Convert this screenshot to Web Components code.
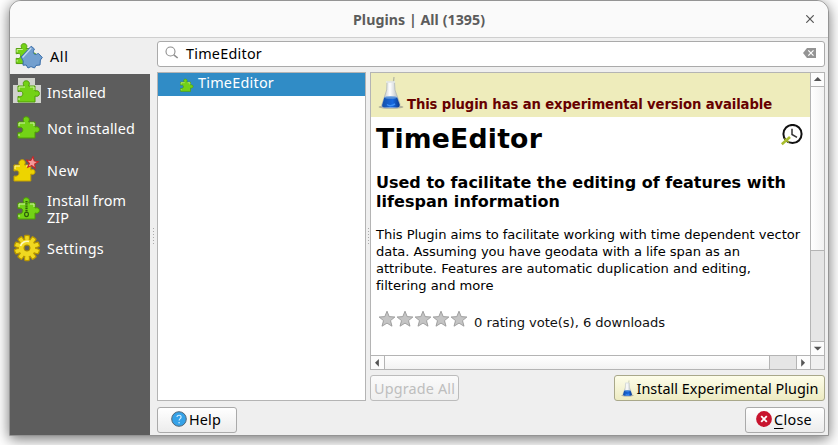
<!DOCTYPE html>
<html lang="en"><head><meta charset="utf-8"><title>Plugins</title>
<style>html,body{margin:0;width:838px;height:445px;overflow:hidden;background:#fff}</style></head><body>
<plugin-window></plugin-window>
<script>
const define=(name,html)=>customElements.define(name,class extends HTMLElement{
  connectedCallback(){ if(!this.shadowRoot) this.attachShadow({mode:'open'}).innerHTML=html; }
});

/* Text tracked to span the width given by w; n is the length of the longest line */
customElements.define('fit-text',class extends HTMLElement{
  connectedCallback(){
    const r=this.attachShadow({mode:'open'});
    r.innerHTML='<style>:host{display:block;white-space:pre}span{display:inline-block;vertical-align:top}</style><span><slot></slot></span>';
    const s=r.querySelector('span'),w=+this.getAttribute('w'),n=+this.getAttribute('n')||this.textContent.length;
    s.style.letterSpacing=((w-s.getBoundingClientRect().width)/n)+'px';
  }
});

const P='M5 8H11C9.3 4.5 10.8 2.8 13.3 2.8S17.3 5 15.6 8H22V13C24.8 12 26.4 13.6 26.4 15.6S24.6 19 22 18V24H5V18.4C8 19.6 9.8 17.8 9.8 15.8S8 12.4 5 13.6Z';
const green=`<path d="${P}" fill="#73d216" stroke="#4e9a06" stroke-width="1"/><path d="M6 12V9H12M17 9H21V12M6 22V20" fill="none" stroke="#d4f5a8"/>`;
const star='M0-5L1.4-1.6 5-1.4 2.2.9 3.2 4.5 0 2.5-3.2 4.5-2.2.9-5-1.4-1.4-1.6Z';
const flask=`<defs><linearGradient id="g"><stop stop-color="#a9b2b6"/><stop offset=".45" stop-color="#fff"/><stop offset="1" stop-color="#a4aeb2"/></linearGradient><linearGradient id="b"><stop stop-color="#1450a8"/><stop offset=".6" stop-color="#1668e0"/><stop offset="1" stop-color="#0a3a8c"/></linearGradient></defs>
<ellipse cx="13" cy="31" rx="12.5" ry="1.8" fill="#777" opacity=".5"/><path d="M14.5 14L16 1" stroke="#b5b8a2" stroke-width="1.3"/><path d="M9 6H16.5L17 14 22 28Q22.5 32 19 32H6Q2.5 32 4 28L8.7 14Z" fill="url(#g)" stroke="#aab3b5" stroke-width=".7"/><path d="M6.3 21.5H19.2L21.6 28.5Q22 31.4 19 31.4H6.5Q3.5 31.4 4.3 28.5Z" fill="url(#b)"/><ellipse cx="12.7" cy="21.5" rx="6.3" ry="1.3" fill="#5b93d8"/><path d="M8 6H17" stroke="#e8ecec" stroke-width="1.5"/><path d="M9 28.5Q12 31 17 28" stroke="#3d90f5" fill="none" stroke-width="1.5"/>`;
const gear=(()=>{let t='';for(let i=0;i<10;i++)t+=`<rect x="-2.3" y="-12.6" width="4.6" height="6" rx=".8" transform="rotate(${i*36})"/>`;return t;})();
const icons={
 all:['0 0 28 28',`<g transform="translate(-3.5,-1)scale(.94)">${green}</g><path d="M6 15L16.2 4.2 19.5 7C17.2 10 18.5 12.5 21 12.5 22 12.2 23 11 23.5 11.5L27.3 15.5 25.4 18 25 23 21 23.4 19.5 26 16 24.6 13 26 11.2 23 8 23.2 8.2 19Z" fill="#729fcf" stroke="#396da9" stroke-width="1" stroke-linejoin="round"/><path d="M7.6 15.5L16.2 6" stroke="#c4daf1" stroke-width="1.2"/>`],
 installed:['0 0 28 28',`<path d="M5 0H22V7H28V25H0V7H5Z" fill="#d0d2cc"/>${green}`],
 puzzle:['0 0 28 28',green],
 item:['4 1 24 24',green],
 fresh:['0 0 28 28',`<path d="M1 9H6.5C4.8 6 7 3.7 9.3 3.7S13.2 6 11.5 9H17.8V14C20 12.8 22 14 22 16S20 19 17.8 18V25H1V20C4 20.8 6 19 6 17S4 14 1 15Z" fill="#edd400" stroke="#c4a000" stroke-width="1"/><path d="M2 13V10H7M13 10H17" stroke="#fff6a0" fill="none"/><path d="${star}" transform="translate(19.2,6.6)scale(1.2)rotate(8)" fill="#f49a9a" stroke="#cc2222" stroke-width=".8"/>`],
 zip:['0 0 28 28',`${green}<path d="M13.5 6V18" stroke="#2e5c0a" stroke-width="2.2" stroke-dasharray="1.4 .8"/><ellipse cx="13.5" cy="19.3" rx="1.9" ry="2.3" fill="none" stroke="#2e5c0a" stroke-width="1.2"/>`],
 gear:['-14 -14 28 28',`<g fill="#edd400" stroke="#b89600" stroke-width="1.3">${gear}<circle r="8.6"/></g><g fill="#f0d820">${gear.replaceAll('-12.6','-11.8').replaceAll('x="-2.3"','x="-1.7"').replaceAll('4.6','3.4')}<circle r="8.2"/></g><path d="M-6.5-2A7 7 0 0 1 2-6.5" stroke="#fffbc0" stroke-width="1.6" fill="none"/><circle r="2.9" fill="#5c5c5c" stroke="#a88a00" stroke-width="1.2"/>`],
 flask:['0 0 26 34',flask],
 search:['0 0 14 14','<g fill="none" stroke="#8d8d8d"><circle cx="5.5" cy="5.5" r="4.5" stroke-width="1.1"/><path d="M8.8 8.8L12.7 12" stroke-width="1.6"/></g>'],
 clear:['0 0 13 10','<path d="M4 0H13V10H4L0 5Z" fill="#949494"/><path d="M5.3 2.3L10.5 7.7M10.5 2.3L5.3 7.7" stroke="#fff" stroke-width="1.2"/>'],
 close:['0 0 8 8','<path d="M.3.3L7.7 7.7M7.7.3L.3 7.7" stroke="#555" stroke-width="1.2"/>'],
 clock:['0 0 22 22','<circle cx="11.5" cy="10" r="9.1" fill="#fff" stroke="#111" stroke-width="2"/><path d="M11 4.7V10.5L16 13.4" fill="none" stroke="#333" stroke-width="1.5"/><path d="M.8 20.2L9 13" stroke="#a8bd2c" stroke-width="2.6"/><path d="M3.5 14.5L8 18.5" stroke="#a8bd2c" stroke-width="1.2"/>'],
 star:['0 0 18 18','<path d="M9 1.2L11.2 6.6 16.9 7 12.5 10.6 14 16.2 9 13.1 4 16.2 5.5 10.6 1.1 7 6.8 6.6Z" fill="#c4c4c4" stroke="#999" stroke-width=".9"/>'],
 help:['0 0 16 16','<circle cx="8" cy="8" r="7.3" fill="#35a2e8" stroke="#536777"/><path d="M6 6.1C6 3.5 10.2 3.6 10.1 6.1 10 7.7 8.1 7.8 8.1 9.6" stroke="#d9f0ff" fill="none" stroke-width="1.1"/><circle cx="8.1" cy="11.7" r=".8" fill="#d9f0ff"/>'],
 stop:['0 0 16 16','<circle cx="8" cy="8" r="7.9" fill="#c8142e"/><path d="M5.2 5.2L10.8 10.8M10.8 5.2L5.2 10.8" stroke="#fff" stroke-width="1.9"/>'],
 up:['0 0 14 14','<path d="M2.5 8.6L6.7 4.4 10.9 8.6Z" fill="#555"/>'],
 down:['0 0 14 14','<path d="M2.5 5L6.7 9.2 10.9 5Z" fill="#555"/>'],
 left:['0 0 14 14','<path d="M8.5 2.6L4.3 6.8 8.5 11Z" fill="#555"/>'],
 right:['0 0 14 14','<path d="M4.5 2.6L8.7 6.8 4.5 11Z" fill="#555"/>']
};
customElements.define('ui-icon',class extends HTMLElement{
  connectedCallback(){
    const [vb,body]=icons[this.getAttribute('name')],w=this.getAttribute('w')||28,h=this.getAttribute('h')||w;
    this.attachShadow({mode:'open'}).innerHTML=`<style>:host{display:block;flex:none;width:${w}px;height:${h}px}svg{display:block}</style><svg width="${w}" height="${h}" viewBox="${vb}">${body}</svg>`;
  }
});

define('title-bar',`<style>:host{display:grid;grid-template-columns:1fr 132px 1fr;align-items:center;height:36px;background:#fafafa;border-bottom:1px solid #cfcfcf;border-radius:11px 11px 0 0;color:#5c5c5c;font-weight:700;font-size:14.2px;box-sizing:content-box}
ui-icon{justify-self:end;margin-right:14px}fit-text{padding-top:1px}</style><span></span><fit-text w="132">Plugins | All (1395)</fit-text><ui-icon name="close" w="8"></ui-icon>`);

define('nav-item',`<style>:host{display:flex;align-items:center;box-sizing:border-box;height:36px;padding-left:3px;color:#fff;gap:6px;line-height:17px}
:host([active]){background:#efefef;color:#000;padding-left:5px;gap:7px}</style><slot name="icon"></slot><div><slot></slot></div>`);

define('side-nav',`<style>:host{display:block;width:140px;background:#5d5d5d}.new{margin-top:6px}.zip{height:41px}.set{height:38px}</style>
<nav-item active><ui-icon slot="icon" name="all"></ui-icon><fit-text w="18.5">All</fit-text></nav-item>
<nav-item><ui-icon slot="icon" name="installed"></ui-icon><fit-text w="59">Installed</fit-text></nav-item>
<nav-item><ui-icon slot="icon" name="puzzle"></ui-icon><fit-text w="88">Not installed</fit-text></nav-item>
<nav-item class="new"><ui-icon slot="icon" name="fresh"></ui-icon><fit-text w="32">New</fit-text></nav-item>
<nav-item class="zip"><ui-icon slot="icon" name="zip"></ui-icon><fit-text w="79" n="12">Install from
ZIP</fit-text></nav-item>
<nav-item class="set"><ui-icon slot="icon" name="gear"></ui-icon><fit-text w="57">Settings</fit-text></nav-item>`);

define('search-field',`<style>:host{display:flex;align-items:center;box-sizing:border-box;height:26px;border:1px solid #aaa;border-radius:3px;background:#fff;padding:0 8px 2px 7px;color:#000}
fit-text{flex:1;margin-left:7px}</style><ui-icon name="search" w="14"></ui-icon><fit-text w="76">TimeEditor</fit-text><ui-icon name="clear" w="13" h="10"></ui-icon>`);

define('plugin-list',`<style>:host{display:block;box-sizing:border-box;border:1px solid #b4b4b4;background:#fff}
.row{display:flex;height:23px;background:#308cc6;color:#fff;padding-left:22px;gap:4px;align-items:center}ui-icon{margin-top:1px}fit-text{margin-top:-4px}</style>
<div class="row"><ui-icon name="item" w="14"></ui-icon><fit-text w="76">TimeEditor</fit-text></div>`);

define('scroll-bar',`<style>:host{display:flex;box-sizing:border-box;background:#e5e5e5}
:host([vertical]){flex-direction:column;border-left:1px solid #b4b4b4;width:15px}
:host([horizontal]){border-top:1px solid #b4b4b4;height:15px}
.t{background:linear-gradient(90deg,#fff,#f1f1f1);box-sizing:border-box}.b{background:#fcfcfc}
:host([vertical]) .t{height:165px;border:solid #b4b4b4;border-width:1px 0}:host([horizontal]) .t{width:386px;border:solid #b4b4b4;border-width:0 1px;background:linear-gradient(#fff,#f1f1f1)}
.s{flex:1}:host([vertical]) .z{border-top:1px solid #b4b4b4}:host([horizontal]) .z{border-left:1px solid #b4b4b4}</style>
<div class="b"><slot name="start"></slot></div><div class="t"></div><div class="s"></div><div class="b z"><slot name="end"></slot></div>`);

define('plugin-details',`<style>:host{display:grid;grid-template:282px 15px/439px 15px;box-sizing:border-box;height:298px;border:1px solid #b4b4b4;background:#fff;font-family:"DejaVu Sans",sans-serif;color:#000;overflow:hidden}
.corner{background:#efefef;border:solid #b4b4b4;border-width:1px 0 0 1px}
.banner{height:44px;background:#eeecbb;display:flex;padding-left:7px;box-sizing:border-box;color:#600;font-weight:700;font-size:13.2px}
.banner ui-icon{margin-top:3px}.banner fit-text{margin:23px 0 0 3px;line-height:17px}
.head{display:flex;justify-content:space-between;padding:6px 7px 0 5px;height:38px}
.h1{font-weight:700;font-size:26.7px;line-height:32px}.head ui-icon{margin-top:1px}
.h3{font-weight:700;font-size:16px;line-height:19px;padding:12px 0 0 5px}
.p{font-size:13.1px;line-height:17px;padding:15px 0 0 5px}
.rate{display:flex;font-size:13.1px;line-height:17px;padding:16px 0 0 7px;color:#111}.rate fit-text{margin:4px 0 0 6px}</style>
<div><div class="banner"><ui-icon name="flask" w="26" h="34"></ui-icon><fit-text w="365">This plugin has an experimental version available</fit-text></div>
<div class="head"><fit-text class="h1" w="166">TimeEditor</fit-text><ui-icon name="clock" w="22"></ui-icon></div>
<div class="h3"><fit-text w="410">Used to facilitate the editing of features with</fit-text><fit-text w="184">lifespan information</fit-text></div>
<div class="p"><fit-text w="424">This Plugin aims to facilitate working with time dependent vector</fit-text><fit-text w="364">data. Assuming you have geodata with a life span as an</fit-text><fit-text w="375">attribute. Features are automatic duplication and editing,</fit-text><fit-text w="117.5">filtering and more</fit-text></div>
<div class="rate"><ui-icon name="star" w="18"></ui-icon><ui-icon name="star" w="18"></ui-icon><ui-icon name="star" w="18"></ui-icon><ui-icon name="star" w="18"></ui-icon><ui-icon name="star" w="18"></ui-icon><fit-text w="191">0 rating vote(s), 6 downloads</fit-text></div></div>
<scroll-bar vertical><ui-icon slot="start" name="up" w="14" h="13"></ui-icon><ui-icon slot="end" name="down" w="14" h="13"></ui-icon></scroll-bar>
<scroll-bar horizontal><ui-icon slot="start" name="left" w="13" h="14"></ui-icon><ui-icon slot="end" name="right" w="13" h="14"></ui-icon></scroll-bar><div class="corner"></div>`);

define('push-button',`<style>:host{display:flex;box-sizing:border-box;height:26px;align-items:center;justify-content:center;gap:2px;border:1px solid #aaa;border-radius:3px;background:linear-gradient(#fff,#ececec);color:#000}
:host([disabled]){color:#bebebe;border-color:#bcbcbc;background:linear-gradient(#fbfbfb,#efefef)}
:host([warm]){background:linear-gradient(#fdfde9,#edebc2);border-color:#a9a88a;gap:3px}</style><slot></slot>`);

define('split-grip',`<style>:host{display:grid;place-items:center}i{width:1px;height:17px;background:repeating-linear-gradient(#aaa 0 1px,transparent 1px 3px)}</style><i></i>`);

define('plugin-window',`<style>:host{display:block;box-sizing:border-box;width:820px;height:436px;margin-left:9px;border:1px solid #949494;border-radius:12px 12px 0 0;background:#efefef;box-shadow:0 3px 14px rgba(0,0,0,.55);font:14.4px/17px "Noto Sans",sans-serif}
.body{display:grid;grid-template-columns:140px 7px 668px;height:397px}
.main{padding-top:3px}.split{display:grid;grid-template-columns:209px 4px 455px;margin-top:5px;height:329px}
.right{display:flex;flex-direction:column;justify-content:space-between}.bar{display:flex;justify-content:space-between}
.bottom{margin-top:6px}.w80{width:80px;padding:0 2px 2px 0}.up{width:89px}.inst{width:211px}.u{text-decoration:underline;text-underline-offset:3px}</style>
<title-bar></title-bar><div class="body"><side-nav></side-nav><split-grip></split-grip><div class="main"><search-field></search-field>
<div class="split"><plugin-list></plugin-list><split-grip></split-grip><div class="right"><plugin-details></plugin-details>
<div class="bar"><push-button class="up" disabled><fit-text w="81">Upgrade All</fit-text></push-button><push-button class="inst" warm><ui-icon name="flask" w="13" h="17"></ui-icon><fit-text w="182">Install Experimental Plugin</fit-text></push-button></div></div></div>
<div class="bar bottom"><push-button class="w80"><ui-icon name="help" w="16"></ui-icon><fit-text w="32">Help</fit-text></push-button><push-button class="w80"><ui-icon name="stop" w="16"></ui-icon><fit-text w="38"><span class="u">C</span>lose</fit-text></push-button></div>
</div></div>`);
</script></body></html>
